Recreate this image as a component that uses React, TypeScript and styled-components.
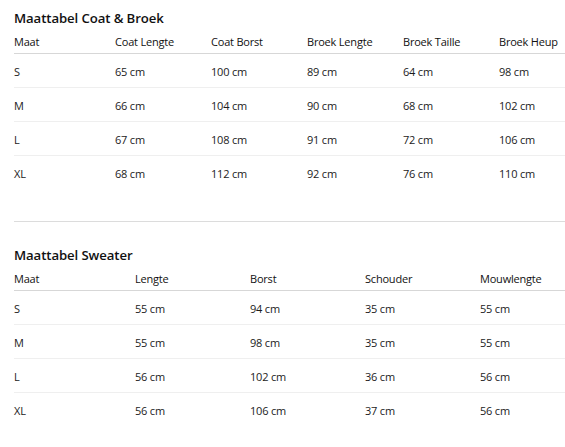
import React from "react";
import styled, { createGlobalStyle } from "styled-components";

const Global = createGlobalStyle`
  html, body { margin: 0; padding: 0; background: #fff; overflow: hidden; }
  body { font-family: "Segoe UI", "Open Sans", "Noto Sans", sans-serif; color: #1b1b1b; }
`;

const Frame = styled.div`
  width: 100vw;
  overflow: hidden;
`;

const Page = styled.div`
  width: 576px;
  padding: 8px 0 0 14px;
`;

const Section = styled.section`
  display: flex;
  flex-direction: column;
`;

const Title = styled.h2`
  margin: 0 0 2px;
  font-size: 13.2px;
  line-height: 20px;
  font-weight: 600;
  color: #111;
  letter-spacing: -0.1px;
`;

const Grid = styled.div<{ $cols: string }>`
  display: grid;
  grid-template-columns: ${(p) => p.$cols};
`;

const HeadRow = styled.div`
  display: contents;
`;

const HeadCell = styled.div`
  height: 24px;
  box-sizing: border-box;
  display: flex;
  align-items: center;
  font-size: 11px;
  letter-spacing: -0.2px;
  color: #111;
  border-bottom: 1px solid #d7d7d7;
  white-space: nowrap;
`;

const Cell = styled.div<{ $last: boolean }>`
  height: 34px;
  box-sizing: border-box;
  display: flex;
  align-items: center;
  padding-top: 1px;
  font-size: 11px;
  letter-spacing: -0.2px;
  color: #1b1b1b;
  border-bottom: 1px solid ${(p) => (p.$last ? "transparent" : "#efefef")};
  white-space: nowrap;
`;

const Divider = styled.hr`
  margin: 31px 0 23px;
  border: none;
  border-top: 1px solid #dcdcdc;
  height: 0;
`;

type TableProps = { title: string; cols: string; head: string[]; rows: string[][] };

function SizeTable({ title, cols, head, rows }: TableProps) {
  return (
    <Section>
      <Title>{title}</Title>
      <Grid $cols={cols}>
        <HeadRow>
          {head.map((h) => (
            <HeadCell key={h}>{h}</HeadCell>
          ))}
        </HeadRow>
        {rows.map((r, ri) =>
          r.map((c, ci) => (
            <Cell key={`${ri}-${ci}`} $last={ri === rows.length - 1}>
              {c}
            </Cell>
          ))
        )}
      </Grid>
    </Section>
  );
}

export default function App() {
  return (
    <>
      <Global />
      <Frame>
        <Page>
          <SizeTable
            title="Maattabel Coat & Broek"
            cols="101px repeat(5, 96px)"
            head={["Maat", "Coat Lengte", "Coat Borst", "Broek Lengte", "Broek Taille", "Broek Heup"]}
            rows={[
              ["S", "65 cm", "100 cm", "89 cm", "64 cm", "98 cm"],
              ["M", "66 cm", "104 cm", "90 cm", "68 cm", "102 cm"],
              ["L", "67 cm", "108 cm", "91 cm", "72 cm", "106 cm"],
              ["XL", "68 cm", "112 cm", "92 cm", "76 cm", "110 cm"],
            ]}
          />
          <Divider />
          <SizeTable
            title="Maattabel Sweater"
            cols="121px repeat(4, 115px)"
            head={["Maat", "Lengte", "Borst", "Schouder", "Mouwlengte"]}
            rows={[
              ["S", "55 cm", "94 cm", "35 cm", "55 cm"],
              ["M", "55 cm", "98 cm", "35 cm", "55 cm"],
              ["L", "56 cm", "102 cm", "36 cm", "56 cm"],
              ["XL", "56 cm", "106 cm", "37 cm", "56 cm"],
            ]}
          />
        </Page>
      </Frame>
    </>
  );
}
